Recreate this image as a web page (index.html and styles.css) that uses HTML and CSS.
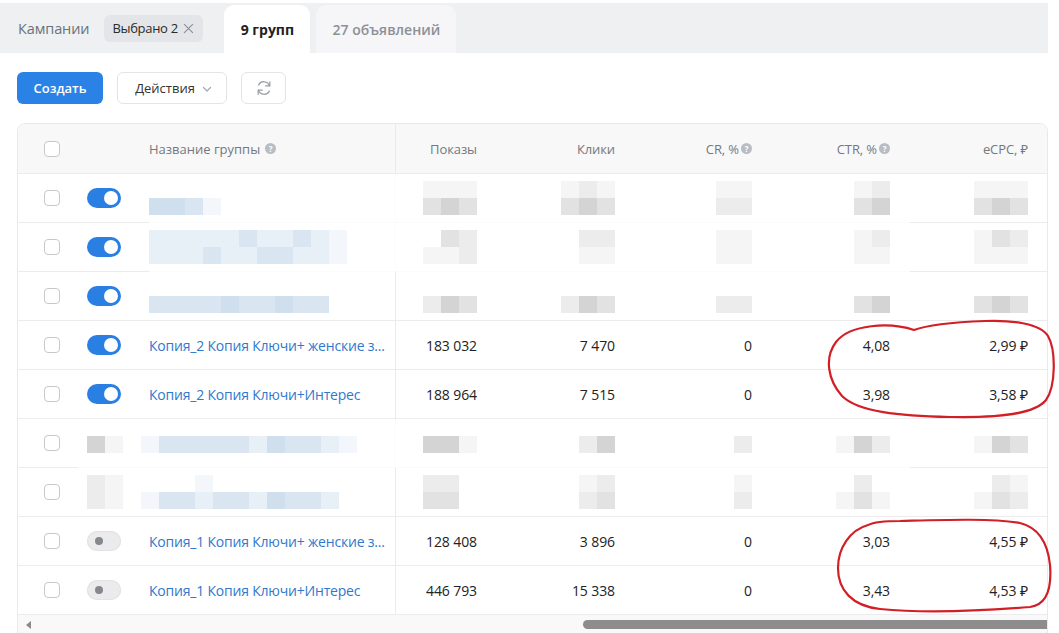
FILE: index.html
```html
<!DOCTYPE html>
<html lang="ru">
<head>
<meta charset="utf-8">
<title>Группы</title>
<link rel="stylesheet" href="styles.css">
</head>
<body>
<div class="page">
  <div class="tabs">
    <span class="crumb">Кампании</span>
    <span class="chip">Выбрано 2
      <svg class="chip-x" viewBox="0 0 12 12" width="11" height="11"><path d="M1.5 1.5l9 9M10.5 1.5l-9 9" stroke="#8b9097" stroke-width="1.2" stroke-linecap="round"/></svg>
    </span>
    <span class="tab active">9 групп</span>
    <span class="tab">27 объявлений</span>
  </div>

  <div class="toolbar">
    <button class="btn primary">Создать</button>
    <button class="btn outline">Действия
      <svg class="chev" viewBox="0 0 12 12" width="12" height="12"><path d="M2.5 4.5 6 8l3.5-3.5" fill="none" stroke="#a3a7ae" stroke-width="1.2" stroke-linecap="round" stroke-linejoin="round"/></svg>
    </button>
    <button class="btn outline icon">
      <svg viewBox="0 0 24 24" width="20" height="20" fill="none" stroke="#9a9ea5" stroke-width="1.5" stroke-linecap="round" stroke-linejoin="round">
        <path d="M18.5 9.5A7 7 0 0 0 5.6 8.2"/>
        <path d="M19 4.5v5h-5"/>
        <path d="M5.5 14.5a7 7 0 0 0 12.9 1.3"/>
        <path d="M5 19.5v-5h5"/>
      </svg>
    </button>
  </div>

  <div class="table">
    <div class="row head">
      <div class="cell chk"><span class="cb"></span></div>
      <div class="cell tg"></div>
      <div class="cell name sticky-end hname">Название группы <span class="q">?</span></div>
      <div class="cell num">Показы</div>
      <div class="cell num">Клики</div>
      <div class="cell num">CR, % <span class="q">?</span></div>
      <div class="cell num">CTR, % <span class="q">?</span></div>
      <div class="cell num">eCPC, ₽</div>
    </div>

    <!-- row 1 blurred -->
    <div class="row blur-row">
      <div class="cell chk"><span class="cb"></span></div>
      <div class="cell tg"><span class="toggle on"></span></div>
      <div class="cell name sticky-end hid">
        <span class="mz"><span class="mr"><i class="w"></i><i class="w"></i><i class="w"></i><i class="w"></i></span><span class="mr"><i class="b3"></i><i class="b3"></i><i class="b2"></i><i class="b0"></i></span></span>
      </div>
      <div class="cell num hid"><span class="mz"><span class="mr"><i class="g0"></i><i class="g0"></i><i class="g0"></i></span><span class="mr"><i class="g2"></i><i class="g3"></i><i class="g2"></i></span></span></div>
      <div class="cell num hid"><span class="mz"><span class="mr"><i class="g0"></i><i class="g1"></i><i class="g0"></i></span><span class="mr"><i class="g2"></i><i class="g3"></i><i class="g2"></i></span></span></div>
      <div class="cell num hid"><span class="mz"><span class="mr"><i class="g0"></i><i class="g0"></i></span><span class="mr"><i class="g1"></i><i class="g1"></i></span></span></div>
      <div class="cell num hid"><span class="mz"><span class="mr"><i class="g0"></i><i class="g1"></i></span><span class="mr"><i class="g2"></i><i class="g3"></i></span></span></div>
      <div class="cell num"><span class="mz"><span class="mr"><i class="g0"></i><i class="g0"></i><i class="g0"></i></span><span class="mr"><i class="g2"></i><i class="g3"></i><i class="g2"></i></span></span></div>
    </div>

    <!-- row 2 blurred -->
    <div class="row blur-row">
      <div class="cell chk"><span class="cb"></span></div>
      <div class="cell tg"><span class="toggle on"></span></div>
      <div class="cell name sticky-end hid">
        <span class="mz"><span class="mr"><i class="b1"></i><i class="b1"></i><i class="b1"></i><i class="b1"></i><i class="b1"></i><i class="b2"></i><i class="b1"></i><i class="b1"></i><i class="b2"></i><i class="b1"></i><i class="b0"></i></span><span class="mr"><i class="b1"></i><i class="b1"></i><i class="b1"></i><i class="b2"></i><i class="b1"></i><i class="b1"></i><i class="b2"></i><i class="b2"></i><i class="b1"></i><i class="b1"></i><i class="b0"></i></span></span>
      </div>
      <div class="cell num hid"><span class="mz"><span class="mr"><i class="w"></i><i class="g2"></i><i class="g1"></i></span><span class="mr"><i class="g0"></i><i class="g0"></i><i class="g1"></i></span></span></div>
      <div class="cell num hid"><span class="mz"><span class="mr"><i class="g1"></i><i class="g1"></i></span><span class="mr"><i class="g0"></i><i class="g0"></i></span></span></div>
      <div class="cell num hid"><span class="mz"><span class="mr"><i class="g0"></i><i class="g0"></i></span><span class="mr"><i class="g0"></i><i class="g0"></i></span></span></div>
      <div class="cell num hid"><span class="mz"><span class="mr"><i class="g0"></i><i class="g1"></i></span><span class="mr"><i class="g0"></i><i class="g0"></i></span></span></div>
      <div class="cell num"><span class="mz"><span class="mr"><i class="g0"></i><i class="g2"></i><i class="g1"></i></span><span class="mr"><i class="g0"></i><i class="g0"></i><i class="g0"></i></span></span></div>
    </div>

    <!-- row 3 blurred -->
    <div class="row">
      <div class="cell chk"><span class="cb"></span></div>
      <div class="cell tg"><span class="toggle on"></span></div>
      <div class="cell name sticky-end">
        <span class="mz"><span class="mr"><i class="w"></i><i class="w"></i><i class="w"></i><i class="w"></i><i class="w"></i><i class="w"></i><i class="w"></i><i class="w"></i><i class="w"></i><i class="w"></i></span><span class="mr"><i class="b2"></i><i class="b2"></i><i class="b2"></i><i class="b2"></i><i class="b3"></i><i class="b2"></i><i class="b2"></i><i class="b3"></i><i class="b2"></i><i class="b2"></i></span></span>
      </div>
      <div class="cell num"><span class="mz"><span class="mr"><i class="w"></i><i class="w"></i><i class="w"></i></span><span class="mr"><i class="g1"></i><i class="g3"></i><i class="g2"></i></span></span></div>
      <div class="cell num"><span class="mz"><span class="mr"><i class="w"></i><i class="w"></i><i class="w"></i></span><span class="mr"><i class="g1"></i><i class="g3"></i><i class="g2"></i></span></span></div>
      <div class="cell num"><span class="mz"><span class="mr"><i class="w"></i><i class="w"></i></span><span class="mr"><i class="g1"></i><i class="g1"></i></span></span></div>
      <div class="cell num"><span class="mz"><span class="mr"><i class="w"></i><i class="w"></i></span><span class="mr"><i class="g2"></i><i class="g3"></i></span></span></div>
      <div class="cell num"><span class="mz"><span class="mr"><i class="w"></i><i class="w"></i><i class="w"></i></span><span class="mr"><i class="g2"></i><i class="g3"></i><i class="g2"></i></span></span></div>
    </div>

    <div class="row">
      <div class="cell chk"><span class="cb"></span></div>
      <div class="cell tg"><span class="toggle on"></span></div>
      <div class="cell name sticky-end"><a class="link">Копия_2 Копия Ключи+ женские з...</a></div>
      <div class="cell num">183 032</div>
      <div class="cell num">7 470</div>
      <div class="cell num">0</div>
      <div class="cell num">4,08</div>
      <div class="cell num">2,99 ₽</div>
    </div>

    <div class="row">
      <div class="cell chk"><span class="cb"></span></div>
      <div class="cell tg"><span class="toggle on"></span></div>
      <div class="cell name sticky-end"><a class="link">Копия_2 Копия Ключи+Интерес</a></div>
      <div class="cell num">188 964</div>
      <div class="cell num">7 515</div>
      <div class="cell num">0</div>
      <div class="cell num">3,98</div>
      <div class="cell num">3,58 ₽</div>
    </div>

    <!-- row 6 blurred -->
    <div class="row blur-row">
      <div class="cell chk"><span class="cb"></span></div>
      <div class="cell tg hid"><span class="mz one"><span class="mr"><i class="g3"></i><i class="g0"></i></span></span></div>
      <div class="cell name sticky-end hid shift">
        <span class="mz one"><span class="mr"><i class="b0"></i><i class="b2"></i><i class="b2"></i><i class="b2"></i><i class="b2"></i><i class="b2"></i><i class="b1"></i><i class="b3"></i><i class="b2"></i><i class="b2"></i><i class="b1"></i><i class="b0"></i></span></span>
      </div>
      <div class="cell num hid"><span class="mz one"><span class="mr"><i class="g3"></i><i class="g3"></i><i class="g0"></i></span></span></div>
      <div class="cell num hid"><span class="mz one"><span class="mr"><i class="g1"></i><i class="g3"></i></span></span></div>
      <div class="cell num hid"><span class="mz one"><span class="mr"><i class="g1"></i></span></span></div>
      <div class="cell num hid"><span class="mz one"><span class="mr"><i class="g0"></i><i class="g3"></i><i class="g1"></i></span></span></div>
      <div class="cell num"><span class="mz one"><span class="mr"><i class="g0"></i><i class="g3"></i><i class="g2"></i></span></span></div>
    </div>

    <!-- row 7 blurred -->
    <div class="row">
      <div class="cell chk"><span class="cb"></span></div>
      <div class="cell tg"><span class="mz"><span class="mr"><i class="g1"></i><i class="g0"></i></span><span class="mr"><i class="g1"></i><i class="g0"></i></span></span></div>
      <div class="cell name sticky-end shift">
        <span class="mz"><span class="mr"><i class="w"></i><i class="w"></i><i class="w"></i><i class="b0"></i><i class="w"></i><i class="w"></i><i class="w"></i><i class="w"></i><i class="w"></i><i class="w"></i><i class="w"></i></span><span class="mr"><i class="b0"></i><i class="b2"></i><i class="b2"></i><i class="b1"></i><i class="b2"></i><i class="b2"></i><i class="b1"></i><i class="b3"></i><i class="b2"></i><i class="b2"></i><i class="b1"></i></span></span>
      </div>
      <div class="cell num"><span class="mz"><span class="mr"><i class="g1"></i><i class="g1"></i><i class="w"></i></span><span class="mr"><i class="g2"></i><i class="g2"></i><i class="w"></i></span></span></div>
      <div class="cell num"><span class="mz"><span class="mr"><i class="g0"></i><i class="g1"></i></span><span class="mr"><i class="g1"></i><i class="g2"></i></span></span></div>
      <div class="cell num"><span class="mz"><span class="mr"><i class="g0"></i></span><span class="mr"><i class="g1"></i></span></span></div>
      <div class="cell num"><span class="mz"><span class="mr"><i class="w"></i><i class="g1"></i><i class="w"></i></span><span class="mr"><i class="g0"></i><i class="g2"></i><i class="g0"></i></span></span></div>
      <div class="cell num"><span class="mz"><span class="mr"><i class="w"></i><i class="g1"></i><i class="g0"></i></span><span class="mr"><i class="g0"></i><i class="g2"></i><i class="g1"></i></span></span></div>
    </div>

    <div class="row">
      <div class="cell chk"><span class="cb"></span></div>
      <div class="cell tg"><span class="toggle off"></span></div>
      <div class="cell name sticky-end"><a class="link">Копия_1 Копия Ключи+ женские з...</a></div>
      <div class="cell num">128 408</div>
      <div class="cell num">3 896</div>
      <div class="cell num">0</div>
      <div class="cell num">3,03</div>
      <div class="cell num">4,55 ₽</div>
    </div>

    <div class="row">
      <div class="cell chk"><span class="cb"></span></div>
      <div class="cell tg"><span class="toggle off"></span></div>
      <div class="cell name sticky-end"><a class="link">Копия_1 Копия Ключи+Интерес</a></div>
      <div class="cell num">446 793</div>
      <div class="cell num">15 338</div>
      <div class="cell num">0</div>
      <div class="cell num">3,43</div>
      <div class="cell num">4,53 ₽</div>
    </div>

    <div class="scrollbar">
      <span class="arrow"></span>
      <span class="thumb"></span>
    </div>
  </div>
</div>

<svg class="marks" viewBox="0 0 1059 633" width="1059" height="633" fill="none" stroke="#d21f26" stroke-width="2.2" stroke-linecap="round" stroke-linejoin="round">
  <path d="M914 330 C 890 322, 850 324, 836 342 C 824 358, 828 380, 842 396 C 858 412, 900 416, 950 417 C 1000 418, 1035 414, 1046 400 C 1056 386, 1056 350, 1048 336 C 1040 323, 1010 320, 985 321 C 960 322, 930 324, 914 330 Z"/>
  <path d="M868 525 C 850 530, 838 548, 838 568 C 838 590, 852 606, 880 609 C 920 613, 980 611, 1030 607 C 1046 605, 1052 590, 1050 565 C 1048 545, 1040 528, 1020 523 C 990 518, 940 520, 900 521 C 885 521, 874 522, 868 525 Z"/>
</svg>
</body>
</html>
```

FILE: styles.css
```css
* { box-sizing: border-box; }
html, body { margin: 0; padding: 0; background: #fff; }
body {
  font-family: "Open Sans", "Noto Sans", "Liberation Sans", sans-serif;
  color: #222;
  width: 1059px;
  height: 633px;
  overflow: hidden;
  position: relative;
}
.page { width: 1048px; }

/* tabs */
.tabs {
  margin-top: 3px;
  height: 50px;
  background: #eef0f2;
  display: flex;
  align-items: stretch;
  padding: 2px 0 0 18px;
}
.crumb {
  align-self: center;
  font-size: 14.5px;
  color: #6c717a;
  margin-right: 15px;
  margin-top: -2px;
  letter-spacing: -0.1px;
}
.chip {
  align-self: center;
  margin-top: -2px;
  height: 27px;
  width: 99px;
  background: #e3e5e8;
  border-radius: 6px;
  display: flex;
  align-items: center;
  padding-left: 8px;
  font-size: 13px;
  color: #2a2a2a;
  margin-right: 21px;
  letter-spacing: -0.3px;
}
.chip-x { margin-left: 5px; }
.tab {
  display: flex;
  align-items: center;
  justify-content: center;
  border-radius: 10px 10px 0 0;
  font-size: 14px;
  font-weight: 600;
  background: #f6f6f8;
  color: #8c9097;
  width: 140px;
  margin-right: 6px;
}
.tab.active { background: #fff; color: #222; width: 86px; font-weight: 700; }

/* toolbar */
.toolbar {
  display: flex;
  gap: 14px;
  padding-left: 17px;
  margin-top: 19px;
  height: 32px;
}
.btn {
  font-family: inherit;
  height: 32px;
  border-radius: 6px;
  font-size: 13px;
  display: flex;
  align-items: center;
  justify-content: center;
  padding: 0;
  cursor: pointer;
}
.btn.primary {
  width: 86px;
  background: #2b82e6;
  border: none;
  color: #fff;
  font-weight: 600;
}
.btn.outline {
  width: 110px;
  background: #fff;
  border: 1px solid #e3e4e8;
  color: #333;
  gap: 6px;
  padding-left: 4px;
}
.btn.icon { width: 45px; padding: 0; }
.chev { margin-top: 1px; }

/* table */
.table {
  margin: 19px 0 0 17px;
  width: 1031px;
  border: 1px solid #e8e9ec;
  border-radius: 8px 8px 0 0;
  overflow: hidden;
}
.row {
  display: grid;
  grid-template-columns: 60px 71px 247px 101px 138px 137px 138px 138px;
  height: 49px;
}
.row.head { height: 50px; background: #f8f8f9; }
.cell {
  display: flex;
  align-items: center;
  border-bottom: 1px solid #ececee;
  font-size: 14px;
  white-space: nowrap;
  overflow: hidden;
}
.head .cell { font-size: 13px; color: #737881; }
.chk { padding-left: 26px; }
.tg { padding-left: 9px; }
.name { padding-right: 8px; }
.sticky-end { border-right: 1px solid #e9eaec; }
.num { justify-content: flex-end; padding-right: 20px; color: #222; letter-spacing: -0.1px; }
.head .num { color: #737881; }

.blur-row .hid { border-bottom-color: #fbfbfb; }
.blur-row .sticky-end.hid { border-right-color: #fbfbfb; }
.shift { margin-left: -8px; }

.q {
  display: inline-flex;
  width: 11px;
  height: 11px;
  border-radius: 50%;
  background: #b9bdc3;
  color: #fff;
  font-size: 8px;
  font-weight: 700;
  align-items: center;
  justify-content: center;
  margin-left: 5px;
  line-height: 1;
}
.num .q { margin-left: 2px; }

.cb {
  width: 16px;
  height: 16px;
  border: 1px solid #c6c8cc;
  border-radius: 4px;
  background: #fff;
}

.toggle {
  width: 34px;
  height: 20px;
  border-radius: 10px;
  position: relative;
  display: block;
}
.toggle.on { background: #2a7fe3; }
.toggle.on::after {
  content: "";
  position: absolute;
  right: 3px;
  top: 3px;
  width: 14px;
  height: 14px;
  border-radius: 50%;
  background: #fff;
}
.toggle.off { background: #ebebed; box-shadow: inset 0 0 0 1px #e2e2e4; }
.toggle.off::after {
  content: "";
  position: absolute;
  left: 8px;
  top: 6px;
  width: 8px;
  height: 8px;
  border-radius: 50%;
  background: #85888d;
}

.link { color: #2f78cc; text-decoration: none; letter-spacing: -0.2px; }

/* mosaic of censored data */
.mz { display: flex; flex-direction: column; }
.mz.one { margin-top: 2px; }
.mr { display: flex; }
.mr i { display: block; width: 18px; height: 17px; }
.w { background: #fff; }
.g0 { background: #f5f5f5; }
.g1 { background: #ececec; }
.g2 { background: #e2e2e2; }
.g3 { background: #d4d4d4; }
.b0 { background: #f3f7fb; }
.b1 { background: #e7eff7; }
.b2 { background: #d9e6f1; }
.b3 { background: #cfdfed; }

/* horizontal scrollbar */
.scrollbar {
  height: 19px;
  background: #f9f9f9;
  display: flex;
  align-items: center;
}
.arrow {
  width: 0; height: 0;
  border-top: 4px solid transparent;
  border-bottom: 4px solid transparent;
  border-right: 5px solid #8a8a8a;
  margin-left: 8px;
}
.thumb {
  margin-left: 552px;
  height: 9px;
  flex: 1;
  background: #8d8d8d;
  border-radius: 5px 0 0 5px;
}

.marks {
  position: absolute;
  top: 0;
  left: 0;
  pointer-events: none;
}
```
